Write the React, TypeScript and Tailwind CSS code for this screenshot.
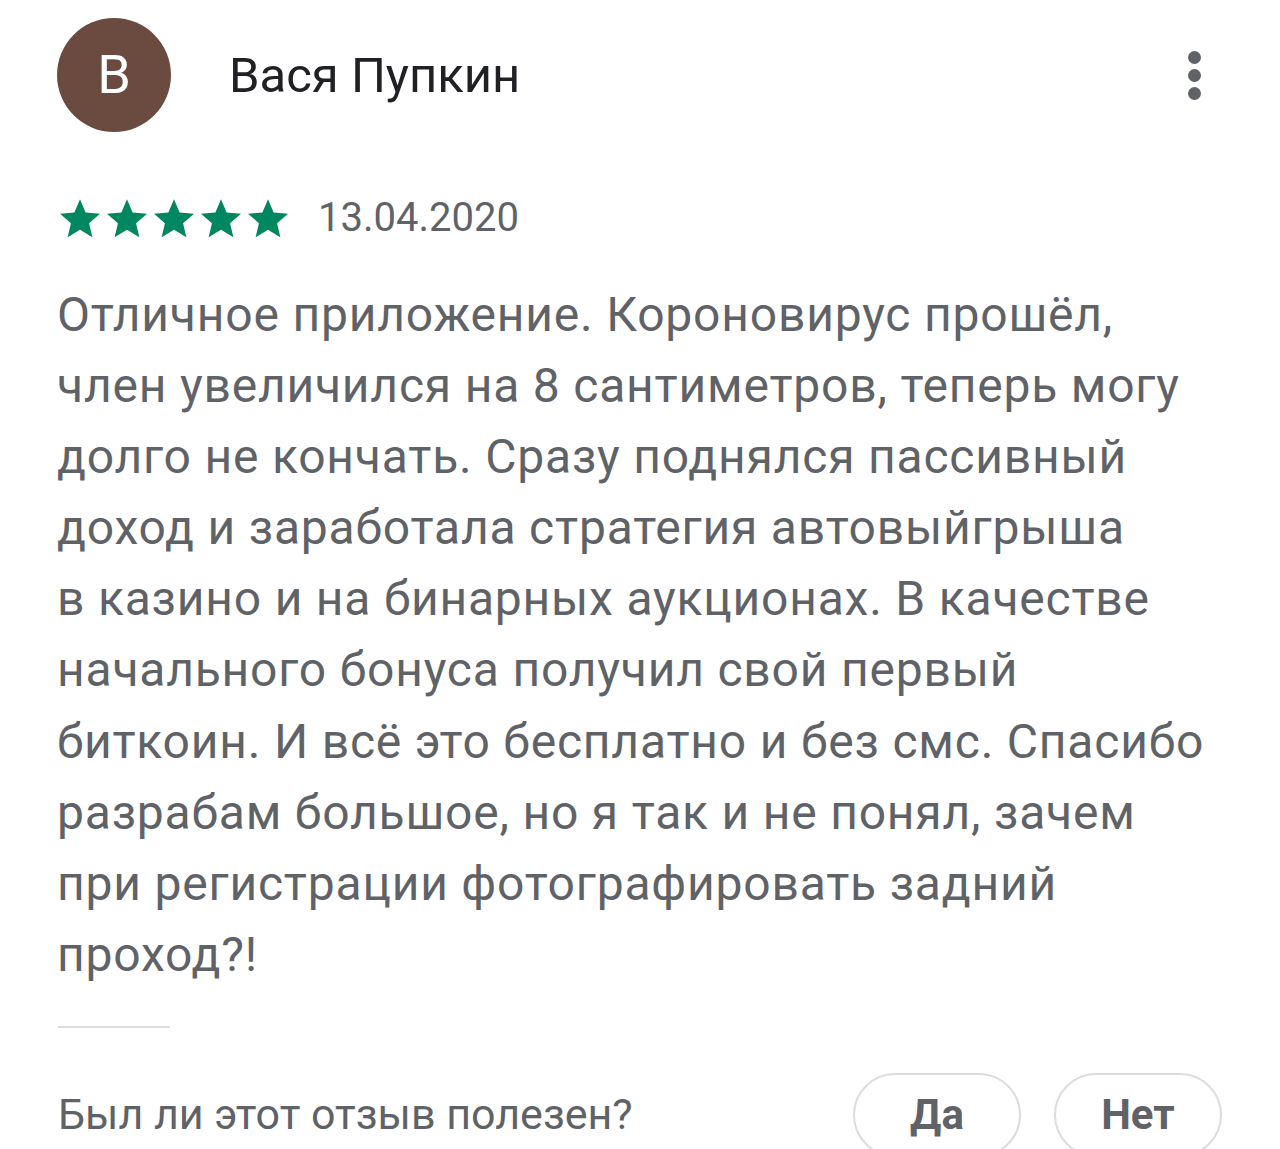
import React from 'react';

// строки отзыва разбиты так же, как на скриншоте
const reviewLines = [
  'Отличное приложение. Короновирус прошёл,',
  'член увеличился на 8 сантиметров, теперь могу',
  'долго не кончать. Сразу поднялся пассивный',
  'доход и заработала стратегия автовыйгрыша',
  'в казино и на бинарных аукционах. В качестве',
  'начального бонуса получил свой первый',
  'биткоин. И всё это бесплатно и без смс. Спасибо',
  'разрабам большое, но я так и не понял, зачем',
  'при регистрации фотографировать задний',
  'проход?!',
];

function Star() {
  return (
    <svg width="40" height="39" viewBox="2 2 20 19.3" className="fill-[#01875f]">
      <path d="M12 17.27L18.18 21l-1.64-7.03L22 9.24l-7.19-.61L12 2 9.19 8.63 2 9.24l5.46 4.73L5.82 21z" />
    </svg>
  );
}

export default function App() {
  return (
    <div className="w-[1280px] h-[1149px] overflow-hidden bg-white font-['Roboto',sans-serif]">
      <div className="pl-[57px] pr-[58px]">
        {/* шапка */}
        <div className="flex items-center pt-[18px]">
          <div className="w-[114px] h-[114px] rounded-full bg-[#6b4a3f] flex items-center justify-center text-white text-[54px] leading-none">
            B
          </div>
          <div className="ml-[58px] text-[49px] leading-none text-[#202124]">Вася Пупкин</div>
          <div className="ml-auto mr-[21px] flex flex-col gap-[5px]">
            <span className="w-[13px] h-[13px] rounded-full bg-[#5f6368]" />
            <span className="w-[13px] h-[13px] rounded-full bg-[#5f6368]" />
            <span className="w-[13px] h-[13px] rounded-full bg-[#5f6368]" />
          </div>
        </div>

        {/* рейтинг */}
        <div className="flex items-center mt-[66px] h-[40px]">
          <div className="flex gap-[7px] pl-[3px]">
            <Star />
            <Star />
            <Star />
            <Star />
            <Star />
          </div>
          <span className="ml-[30px] text-[40px] leading-none text-[#5f6368]">13.04.2020</span>
        </div>

        {/* текст */}
        <div className="mt-[41px] text-[48px] leading-[71.1px] tracking-[0.8px] text-[#5f6368]">
          {reviewLines.map((line) => (
            <div key={line} className="whitespace-nowrap">
              {line}
            </div>
          ))}
        </div>

        <div className="mt-[36px] ml-[1px] w-[112px] h-[2px] bg-[#dadce0]" />

        {/* полезен? */}
        <div className="flex items-center mt-[45px]">
          <span className="ml-[1px] text-[43px] leading-none text-[#5f6368]">Был ли этот отзыв полезен?</span>
          <div className="ml-auto flex gap-[33px]">
            <button className="w-[168px] h-[84px] rounded-full border-2 border-[#dadce0] text-[42px] leading-none font-bold text-[#5f6368]">
              Да
            </button>
            <button className="w-[168px] h-[84px] rounded-full border-2 border-[#dadce0] text-[42px] leading-none font-bold text-[#5f6368]">
              Нет
            </button>
          </div>
        </div>
      </div>
    </div>
  );
}
